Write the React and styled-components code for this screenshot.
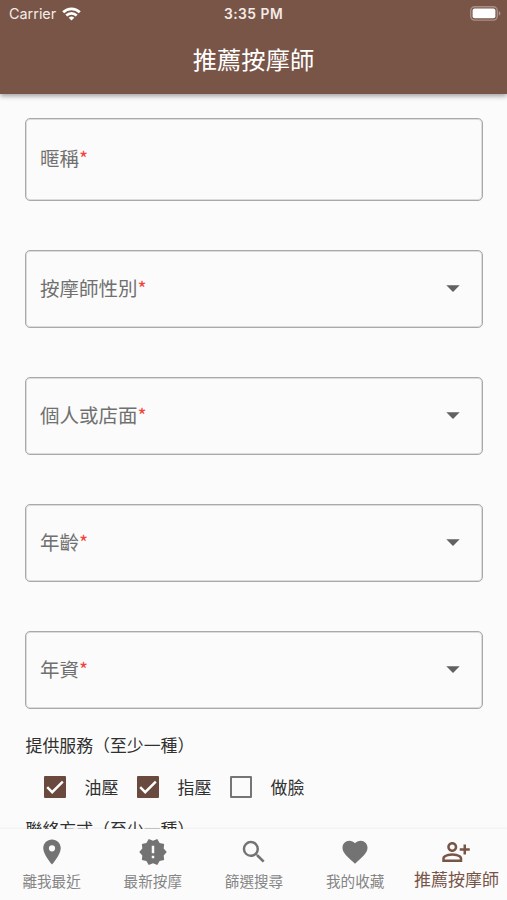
import React, { useState } from 'react'
import styled, { createGlobalStyle } from 'styled-components'
import { MdPlace, MdNewReleases, MdSearch, MdFavorite, MdOutlinePersonAddAlt, MdArrowDropDown } from 'react-icons/md'

const fields = [
    { id: 'nickname', label: '暱稱' },
    { id: 'gender', label: '按摩師性別', select: true },
    { id: 'type', label: '個人或店面', select: true },
    { id: 'age', label: '年齡', select: true },
    { id: 'seniority', label: '年資', select: true },
]

const services = ['油壓', '指壓', '做臉']

const tabs = [
    { label: '離我最近', Icon: MdPlace },
    { label: '最新按摩', Icon: MdNewReleases },
    { label: '篩選搜尋', Icon: MdSearch },
    { label: '我的收藏', Icon: MdFavorite },
    { label: '推薦按摩師', Icon: MdOutlinePersonAddAlt },
]

export default function App() {
    const [checked, setChecked] = useState(['油壓', '指壓'])
    const [activeTab, setActiveTab] = useState('推薦按摩師')

    const toggleService = (service) => {
        if (checked.includes(service)) setChecked(checked.filter(item => item !== service))
        else setChecked([...checked, service])
    }

    return (
        <Screen>
            <GlobalStyle />
            <Header>
                <StatusBar>
                    <Carrier>
                        Carrier
                        <WifiIcon />
                    </Carrier>
                    <Time>3:35 PM</Time>
                    <BatteryIcon />
                </StatusBar>
                <Title>推薦按摩師</Title>
            </Header>
            <Form>
                {fields.map(field => (
                    <Field key={field.id} $select={field.select}>
                        <FieldLabel>{field.label}<Required>*</Required></FieldLabel>
                        {field.select && <MdArrowDropDown size={32} color="#616161" />}
                    </Field>
                ))}
                <SectionTitle>提供服務（至少一種）</SectionTitle>
                <Services>
                    {services.map(service => (
                        <Service key={service} onClick={() => toggleService(service)}>
                            <Box $checked={checked.includes(service)}>
                                {checked.includes(service) && <CheckMark />}
                            </Box>
                            {service}
                        </Service>
                    ))}
                </Services>
                <SectionTitle>聯絡方式（至少一種）</SectionTitle>
            </Form>
            <NavBar>
                {tabs.map(({ label, Icon }) => (
                    <Tab key={label} $active={activeTab === label} onClick={() => setActiveTab(label)}>
                        <Icon size={30} />
                        <TabLabel $active={activeTab === label}>{label}</TabLabel>
                    </Tab>
                ))}
            </NavBar>
        </Screen>
    )
}

const WifiIcon = () => (
    <svg width="19" height="14" viewBox="0 0 19 14" fill="none" stroke="#fff" strokeWidth="2.7">
        <path d="M1.2 5.2a11.8 11.8 0 0 1 16.6 0" />
        <path d="M4.3 8.5a7.4 7.4 0 0 1 10.4 0" />
        <path d="M9.5 13.6 6.7 10.8a4 4 0 0 1 5.6 0z" fill="#fff" stroke="none" />
    </svg>
)

const BatteryIcon = () => (
    <svg width="31" height="15" viewBox="0 0 31 15">
        <rect x="0.7" y="0.7" width="26.6" height="13.4" rx="4" fill="none" stroke="#fff" strokeOpacity="0.35" strokeWidth="1.4" />
        <rect x="2.6" y="2.6" width="22.8" height="9.6" rx="2" fill="#fff" />
        <path d="M28.8 5.2v4.4c1-.4 1.6-1.2 1.6-2.2s-.6-1.8-1.6-2.2z" fill="#fff" fillOpacity="0.4" />
    </svg>
)

const CheckMark = () => (
    <svg width="22" height="22" viewBox="0 0 22 22" fill="none" stroke="#fff" strokeWidth="2.4">
        <path d="M3.2 11.2l5 5L18.8 5.6" />
    </svg>
)

const GlobalStyle = createGlobalStyle`
    * {
        box-sizing: border-box;
    }
    body {
        margin: 0;
        background-color: #fafafa;
    }
`

const Screen = styled.div`
    display: flex;
    flex-direction: column;
    height: 900px;
    overflow: hidden;
    background-color: #fbfbfb;
    color: #303030;
    font-family: "Noto Sans CJK TC", sans-serif;
`

const Header = styled.header`
    flex: none;
    height: 94px;
    z-index: 1;
    color: #fff;
    background-color: #795548;
    box-shadow: 0 2px 5px rgba(0, 0, 0, 0.38);
`

const StatusBar = styled.div`
    display: grid;
    grid-template-columns: 1fr auto 1fr;
    align-items: center;
    height: 27px;
    padding: 0 6px 0 9px;
    font-family: Inter, sans-serif;
    font-size: 14.4px;
    & > :last-child {
        justify-self: end;
    }
`

const Carrier = styled.div`
    display: flex;
    align-items: center;
    gap: 6px;
    color: #f3ebe7;
`

const Time = styled.div`
    margin-right: 3px;
    font-size: 13.8px;
    font-weight: 600;
    letter-spacing: 0.5px;
    color: #f3ebe7;
`

const Title = styled.h1`
    margin: 0;
    font-size: 24.3px;
    line-height: 63px;
    font-weight: 400;
    text-align: center;
`

const Form = styled.main`
    flex: 1;
    min-height: 0;
    overflow: hidden;
    padding: 24px 24px 0 25px;
`

const Field = styled.div`
    display: flex;
    align-items: center;
    justify-content: space-between;
    height: ${({ $select }) => ($select ? 78 : 83)}px;
    margin-bottom: 49px;
    padding: 0 13px 2px 14px;
    border: 1px solid #a9a9a9;
    border-radius: 5px;
    box-shadow: inset 0 0 0 1px rgba(0, 0, 0, 0.12);
    color: #707070;
    &:nth-of-type(5) {
        margin-bottom: 23px;
    }
`

const FieldLabel = styled.label`
    font-size: 19.5px;
    line-height: 28px;
    padding-bottom: 1px;
`

const Required = styled.span`
    color: #f44336;
`

const SectionTitle = styled.div`
    padding-left: 0.5px;
    font-size: 16.9px;
    line-height: 26px;
`

const Services = styled.div`
    display: flex;
    height: 58px;
    padding-left: 18px;
`

const Service = styled.div`
    display: flex;
    align-items: center;
    width: 93px;
    gap: 19px;
    font-size: 16.9px;
    line-height: 26px;
    cursor: pointer;
`

const Box = styled.div`
    display: flex;
    align-items: center;
    justify-content: center;
    width: 22px;
    height: 22px;
    margin-left: 0.6px;
    border: 2px solid ${({ $checked }) => ($checked ? '#6a493e' : '#757575')};
    border-radius: 1px;
    background-color: ${({ $checked }) => ($checked ? '#6a493e' : 'transparent')};
    & svg {
        flex: none;
    }
`

const NavBar = styled.nav`
    display: grid;
    flex: none;
    grid-template-columns: repeat(5, 1fr);
    height: 71px;
    padding-left: 1px;
    background-color: #fbfbfb;
    box-shadow: 0 -1px 2px rgba(0, 0, 0, 0.05);
    z-index: 1;
`

const Tab = styled.div`
    display: flex;
    flex-direction: column;
    align-items: center;
    padding-top: 8px;
    color: ${({ $active }) => ($active ? '#795548' : '#737373')};
    cursor: pointer;
`

const TabLabel = styled.span`
    margin-top: ${({ $active }) => ($active ? -1 : 1)}px;
    font-size: ${({ $active }) => ($active ? 17 : 14.6)}px;
    line-height: 26px;
    white-space: nowrap;
    color: ${({ $active }) => ($active ? '#795548' : '#858585')};
`
